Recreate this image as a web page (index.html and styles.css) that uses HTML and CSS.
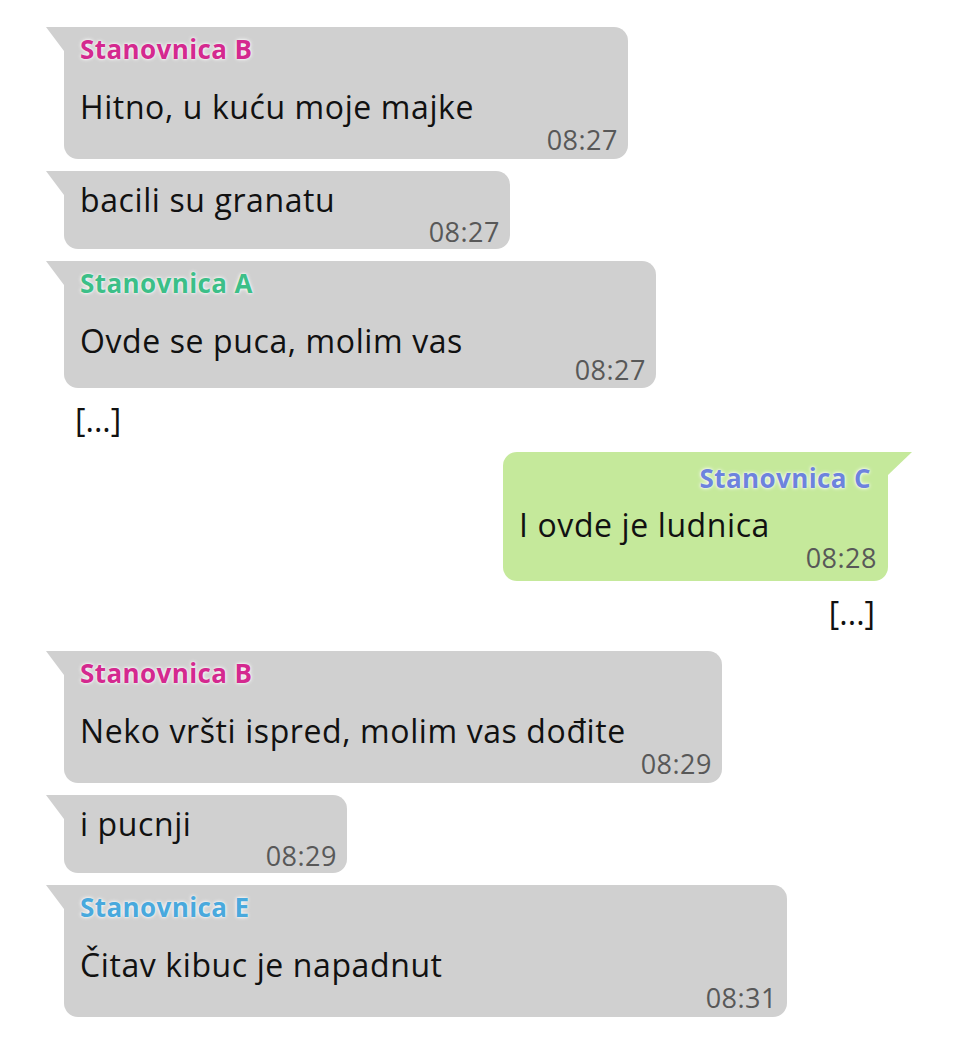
FILE: index.html
```html
<!DOCTYPE html>
<html lang="sr">
<head>
  <meta charset="UTF-8" />
  <title>Chat</title>
  <link rel="stylesheet" href="styles.css">
</head>
<body>
  <div class="chat">
    <div class="bubble named b1">
      <div class="name pink">Stanovnica B</div>
      <div class="text">Hitno, u kuću moje majke</div>
      <div class="time">08:27</div>
    </div>

    <div class="bubble b2">
      <div class="text">bacili su granatu</div>
      <div class="time">08:27</div>
    </div>

    <div class="bubble named b3">
      <div class="name green">Stanovnica A</div>
      <div class="text">Ovde se puca, molim vas</div>
      <div class="time">08:27</div>
    </div>

    <div class="skip skip-left">[...]</div>

    <div class="bubble own">
      <div class="name violet">Stanovnica C</div>
      <div class="text">I ovde je ludnica</div>
      <div class="time">08:28</div>
    </div>

    <div class="skip skip-right">[...]</div>

    <div class="bubble named b5">
      <div class="name pink">Stanovnica B</div>
      <div class="text">Neko vršti ispred, molim vas dođite</div>
      <div class="time">08:29</div>
    </div>

    <div class="bubble b6">
      <div class="text">i pucnji</div>
      <div class="time">08:29</div>
    </div>

    <div class="bubble named b7">
      <div class="name blue">Stanovnica E</div>
      <div class="text">Čitav kibuc je napadnut</div>
      <div class="time">08:31</div>
    </div>
  </div>
</body>
</html>
```

FILE: styles.css
```css
* {
  box-sizing: border-box;
  margin: 0;
  padding: 0;
}

body {
  background: #ffffff;
  font-family: 'Open Sans', 'Noto Sans', sans-serif;
  color: #111111;
}

.chat {
  display: flex;
  flex-direction: column;
  align-items: flex-start;
  gap: 12px;
  padding: 27px 0 20px 64px;
}

.bubble {
  position: relative;
  background: #d0d0d0;
  border-radius: 0 14px 14px 14px;
  padding: 7px 10px 2px 16px;
}

/* little tail at the top corner */
.bubble::before {
  content: "";
  position: absolute;
  top: 0;
  left: -18px;
  width: 0;
  height: 0;
  border-top: 24px solid #d0d0d0;
  border-left: 18px solid transparent;
}

.named {
  padding-top: 6px;
  padding-bottom: 4px;
}

.name {
  font-size: 26px;
  font-weight: 700;
  line-height: 32px;
  letter-spacing: 0.4px;
  text-shadow: 0 0 4px #ffffff, 0 0 2px #ffffff;
}

.pink { color: #d4298f; }
.green { color: #3cbf88; }
.violet { color: #6d83dd; }
.blue { color: #49a9dd; }

.text {
  font-size: 32px;
  line-height: 44px;
  letter-spacing: 0.6px;
}

.named .text {
  margin-top: 20px;
}

.time {
  font-size: 27px;
  line-height: 30px;
  letter-spacing: 0.5px;
  color: #585858;
  text-align: right;
  margin-top: -5px;
}

.named .time {
  margin-top: -4px;
}

.b1 { width: 564px; }
.b2 { width: 446px; }
.b3 { width: 592px; }
.b5 { width: 658px; }
.b6 { width: 283px; }
.b7 { width: 723px; }

.b3 .time {
  margin-top: -8px;
}

.b3 {
  padding-bottom: 3px;
}

.own {
  align-self: flex-end;
  margin-right: 68px;
  width: 385px;
  background: #c5e99b;
  border-radius: 14px 0 14px 14px;
  padding: 10px 11px 8px 16px;
}

.own::before {
  left: auto;
  right: -24px;
  border-top: 23px solid #c5e99b;
  border-left: none;
  border-right: 24px solid transparent;
}

.own .name {
  text-align: right;
  padding-right: 6px;
}

.own .text {
  margin-top: 9px;
}

.own .time {
  margin-top: -4px;
}

.skip {
  font-size: 32px;
  line-height: 40px;
}

.skip-left {
  margin-left: 11px;
}

.skip-right {
  align-self: flex-end;
  margin: 0 81px 6px 0;
}
```
